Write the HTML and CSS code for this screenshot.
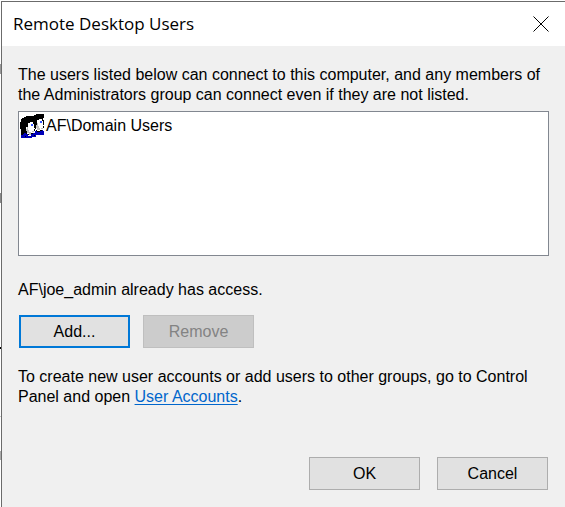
FILE: index.html
```html
<!DOCTYPE html>
<html lang="en">
<head>
<meta charset="utf-8">
<title>Remote Desktop Users</title>
<link rel="stylesheet" href="styles.css">
</head>
<body>
<main class="dialog">
  <header class="titlebar">
    <h1 class="title">Remote Desktop Users</h1>
    <button class="close" type="button" aria-label="Close">
      <svg width="16" height="16" viewBox="0 0 16 16" aria-hidden="true"><path d="M.5 .5l15 15M15.5 .5l-15 15" fill="none" stroke="#000" stroke-width="1"/></svg>
    </button>
  </header>
  <section class="content">
    <p class="text">The users listed below can connect to this computer, and any members of the Administrators group can connect even if they are not listed.</p>
    <ul class="users">
      <li class="user">
        <svg class="user-icon" width="24" height="24" viewBox="0 0 24 24" shape-rendering="crispEdges" aria-hidden="true">
          <path fill="#000" d="M14 1h2V0h8v4h-1v2h1v8h-1v4h-7v-3h-3V9h-2V3h1V2h2z"/>
          <path fill="#fff" d="M17 6h2V5h3v2h1v4h1v1h-1v4h-3v1h-3v-1h-1v-5h1z"/>
          <path fill="#c0c0c0" d="M17 9h1v3h1v2h1v2h-3v-2h-1v-3h1zM21 14h2v1h-2z"/>
          <path fill="#0000b8" d="M15 17h2v1h3v-1h2v-1h1v1h1v4h-9z"/>
          <path fill="#000" d="M4 3h2V2h6v1h2v4h-1v2h2v8h-2v4H4v-1H2v-2H1v-3H0V8h1V5h1V4h2z"/>
          <path fill="#fff" d="M8 9h2V8h3v2h1v4h1v1h-1v4h-3v3H9v-2H7v-3H6v-4h2z"/>
          <path fill="#c0c0c0" d="M7 13h1v3h1v2h2v3H9v-2H7v-2H6v-2h1zM12 17h2v1h-2z"/>
          <path fill="#0000b8" d="M1 20h2v-1h3v1h2v2h3v-2h2v-1h2v1h1v3h-4v1H1z"/>
          <path fill="#000" d="M1 18h3v2H3v1H1zM14 21h1v1h-1zM5 22h1v1H5z"/>
          <path fill="#3050ff" d="M11 10h2v2h-2zM20 7h2v2h-2z"/>
        </svg>
        <span>AF\Domain Users</span>
      </li>
    </ul>
    <p class="text access">AF\joe_admin already has access.</p>
    <div class="actions">
      <button class="button primary" type="button">Add...</button>
      <button class="button" type="button" disabled>Remove</button>
    </div>
    <p class="text">To create new user accounts or add users to other groups, go to Control Panel and open <a class="link" href="#">User Accounts</a>.</p>
    <footer class="footer">
      <button class="button" type="button">OK</button>
      <button class="button" type="button">Cancel</button>
    </footer>
  </section>
</main>
</body>
</html>
```
FILE: styles.css
```css
* {
  box-sizing: border-box;
}

/* Slivers of the window behind the dialog show along the left edge. */
body {
  margin: 0;
  padding: 1px 0 0 1px;
  min-height: 100vh;
  display: flex;
  background:
    linear-gradient(#999, #999) 0 64px / 1px 10px no-repeat,
    linear-gradient(#888, #888) 0 193px / 1px 10px no-repeat,
    linear-gradient(#000, #000) 0 347px / 1px 2px no-repeat,
    linear-gradient(#ccc, #ccc) 0 416px / 1px 1px no-repeat,
    linear-gradient(#aaa, #aaa) 0 451px / 1px 9px no-repeat,
    #fff;
  color: #000;
  font: 16px/20px "Liberation Sans", Arial, sans-serif;
}

.dialog {
  flex: 1;
  display: flex;
  flex-direction: column;
  border: solid #6b6b6b;
  border-width: 1px 0 0 1px;
  background: #f0f0f0;
}

.titlebar {
  display: flex;
  align-items: center;
  justify-content: space-between;
  height: 44px;
  padding: 0 16px 0 11px;
  background: #fff;
}

.title {
  margin: 0;
  font: 400 17px/24px "Open Sans", "Noto Sans", sans-serif;
}

.close {
  display: flex;
  padding: 0;
  border: 0;
  background: none;
}

.content {
  flex: 1;
  display: flex;
  flex-direction: column;
  padding: 19px 16px 17px;
}

.text {
  margin: 0;
}

.users {
  height: 145px;
  margin: 6px 0 24px;
  padding: 1px;
  border: 1px solid #828790;
  background: #fff;
  list-style: none;
}

.user {
  display: flex;
  align-items: center;
  gap: 2px;
  height: 26px;
}

.access {
  margin-bottom: 15px;
}

.actions {
  display: flex;
  gap: 13px;
  margin: 0 0 19px 1px;
}

.button {
  width: 111px;
  height: 33px;
  padding: 0;
  border: 1px solid #adadad;
  background: #e1e1e1;
  color: #000;
  font: inherit;
}

.primary {
  border: 2px solid #0078d7;
}

.button:disabled {
  border-color: #bfbfbf;
  background: #ccc;
  color: #838383;
}

.link {
  color: #0066cc;
  text-underline-offset: 2px;
}

.footer {
  display: flex;
  justify-content: flex-end;
  gap: 17px;
  margin-top: auto;
  padding-right: 1px;
}
```
